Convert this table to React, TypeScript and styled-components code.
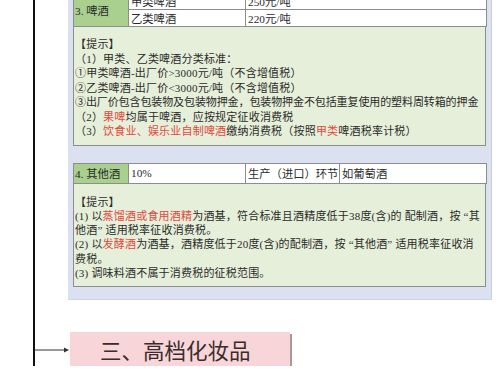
import React from "react";
import styled, { createGlobalStyle } from "styled-components";

const GlobalStyle = createGlobalStyle`
  html, body {
    margin: 0;
    padding: 0;
    background: #ffffff;
    overflow: hidden;
  }
  body {
    font-family: "Liberation Serif", "Noto Sans CJK SC", serif;
    color: #2b2b2b;
  }
`;

const Page = styled.div`
  width: 500px;
  height: 380px;
  margin-top: -14px;
  padding-left: 33px;
  box-sizing: border-box;
`;

const Rail = styled.div`
  border-left: 2px solid #111;
  padding-left: 33px;
  min-height: 420px;
`;

const Panel = styled.div`
  width: 424px;
  box-sizing: border-box;
  background: #dce1f2;
  border-right: 1px solid #c9cfe7;
  box-shadow: 0 1px 0 #cfd4ea;
  padding: 6px 5px 12px 5px;
  display: flex;
  flex-direction: column;
`;

const Table = styled.table<{ $gap?: number }>`
  width: 414px;
  border-collapse: collapse;
  table-layout: fixed;
  margin-top: ${(p) => p.$gap ?? 0}px;
  font-size: 11.3px;
  td {
    border: 1px solid #8d8d8d;
    background: #fff;
    padding: 0 2px;
    white-space: nowrap;
    overflow: hidden;
  }
`;

const Row = styled.tr<{ $h: number }>`
  height: ${(p) => p.$h}px;
`;

const Label = styled.td`
  && {
    background: #a9d08e;
    padding-left: 1px;
  }
`;

const Hint = styled.div<{ $pt: number; $pb: number; $lh: number }>`
  background: #e6efd9;
  border: 1px solid #8d8d8d;
  border-top: none;
  padding: ${(p) => p.$pt}px 1px ${(p) => p.$pb}px 1px;
  font-size: 11px;
  line-height: ${(p) => p.$lh}px;
  white-space: nowrap;
  overflow: hidden;
`;

const Line = styled.div<{ $ls?: number }>`
  letter-spacing: ${(p) => p.$ls ?? 0.2}px;
`;

const Red = styled.span`
  color: #e2483c;
`;

const HeadingRow = styled.div`
  display: flex;
  align-items: center;
  margin-top: 33px;
  margin-left: -33px;
`;

const Arrow = styled.svg`
  width: 35px;
  height: 8px;
  flex: none;
`;

const HeadingBox = styled.div`
  width: 220px;
  height: 35px;
  box-sizing: border-box;
  background: #f7d5d9;
  box-shadow: 2px 2px 0 #a9989a;
  padding-left: 30px;
  display: flex;
  align-items: center;
  font-family: "Noto Sans CJK SC", sans-serif;
  font-size: 21.5px;
  color: #3a2c2c;
`;

const PinkBar = styled.div`
  margin: 2px 0 0 4px;
  width: 420px;
  height: 30px;
  background: #f9dcdf;
`;

export default function App() {
  return (
    <>
      <GlobalStyle />
      <Page>
        <Rail>
          <Panel>
            <Table>
              <colgroup>
                <col style={{ width: 55 }} />
                <col style={{ width: 117 }} />
                <col />
              </colgroup>
              <tbody>
                <Row $h={17}>
                  <Label rowSpan={2}>3. 啤酒</Label>
                  <td>甲类啤酒</td>
                  <td>250元/吨</td>
                </Row>
                <Row $h={17}>
                  <td>乙类啤酒</td>
                  <td>220元/吨</td>
                </Row>
              </tbody>
            </Table>
            <Hint $pt={10} $pb={6} $lh={14.5}>
              <Line>【提示】</Line>
              <Line>（1）甲类、乙类啤酒分类标准：</Line>
              <Line>①甲类啤酒-出厂价&gt;3000元/吨（不含增值税）</Line>
              <Line>②乙类啤酒-出厂价&lt;3000元/吨（不含增值税）</Line>
              <Line $ls={-0.1}>③出厂价包含包装物及包装物押金，包装物押金不包括重复使用的塑料周转箱的押金</Line>
              <Line>
                （2）<Red>果啤</Red>均属于啤酒，应按规定征收消费税
              </Line>
              <Line>
                （3）<Red>饮食业、娱乐业自制啤酒</Red>缴纳消费税（按照<Red>甲类</Red>啤酒税率计税）
              </Line>
            </Hint>
            <Table $gap={17}>
              <colgroup>
                <col style={{ width: 55 }} />
                <col style={{ width: 117 }} />
                <col style={{ width: 94 }} />
                <col />
              </colgroup>
              <tbody>
                <Row $h={20}>
                  <Label>4. 其他酒</Label>
                  <td>10%</td>
                  <td>生产（进口）环节</td>
                  <td>如葡萄酒</td>
                </Row>
              </tbody>
            </Table>
            <Hint $pt={11} $pb={6} $lh={14.3}>
              <Line>【提示】</Line>
              <Line>
                (1) 以<Red>蒸馏酒或食用酒精</Red>为酒基，符合标准且酒精度低于38度(含)的 配制酒，按 “其
              </Line>
              <Line>他酒” 适用税率征收消费税。</Line>
              <Line>
                (2) 以<Red>发酵酒</Red>为酒基，酒精度低于20度(含)的配制酒，按 “其他酒” 适用税率征收消
              </Line>
              <Line>费税。</Line>
              <Line>(3) 调味料酒不属于消费税的征税范围。</Line>
            </Hint>
          </Panel>
          <HeadingRow>
            <Arrow viewBox="0 0 35 8">
              <line x1="0" y1="4" x2="31" y2="4" stroke="#333" strokeWidth="1" />
              <path d="M29 1.5 L34 4 L29 6.5 Z" fill="#333" />
            </Arrow>
            <HeadingBox>三、高档化妆品</HeadingBox>
          </HeadingRow>
          <PinkBar />
        </Rail>
      </Page>
    </>
  );
}
